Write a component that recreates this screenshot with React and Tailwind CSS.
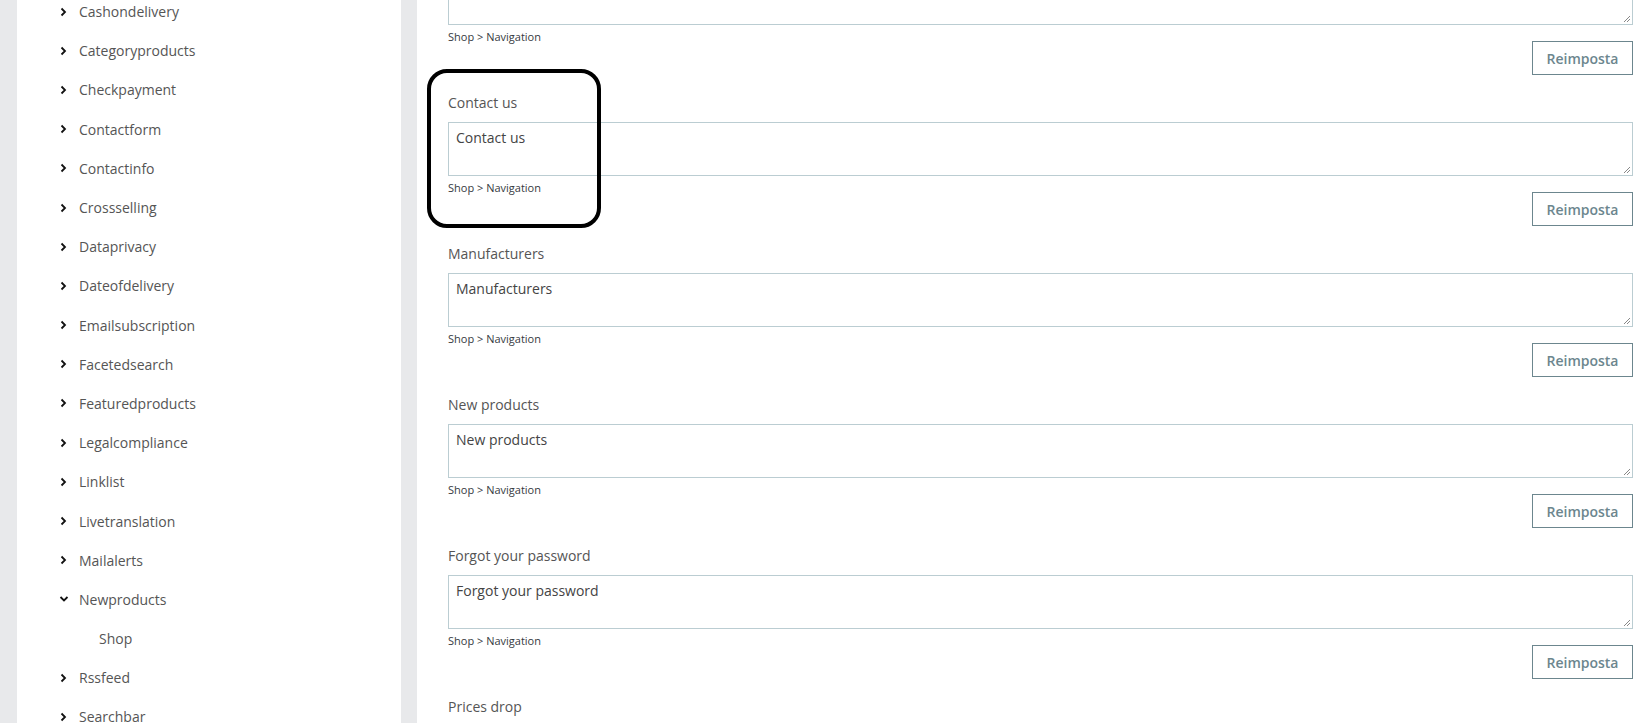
import React from 'react';

const modules = [
  'Cashondelivery',
  'Categoryproducts',
  'Checkpayment',
  'Contactform',
  'Contactinfo',
  'Crossselling',
  'Dataprivacy',
  'Dateofdelivery',
  'Emailsubscription',
  'Facetedsearch',
  'Featuredproducts',
  'Legalcompliance',
  'Linklist',
  'Livetranslation',
  'Mailalerts',
  'Newproducts',
  'Rssfeed',
  'Searchbar',
];

const fields = ['', 'Contact us', 'Manufacturers', 'New products', 'Forgot your password', 'Prices drop'];

function Chevron({ open }) {
  return (
    <svg width="10" height="10" viewBox="0 0 10 10" className="shrink-0">
      {open ? (
        <path d="M1.5 3 L5 6.5 L8.5 3" fill="none" stroke="#111" strokeWidth="1.8" />
      ) : (
        <path d="M2.5 1.5 L6 5 L2.5 8.5" fill="none" stroke="#111" strokeWidth="1.8" />
      )}
    </svg>
  );
}

function Field({ label }) {
  return (
    <div className="mb-[18px]">
      <div className="h-[20px] leading-[20px] text-[14px] text-[#555] mb-[9px]">{label}</div>
      <div className="relative h-[54px] border border-[#bbcdd2] bg-white px-[7px] pt-[4px] text-[14px] text-[#444]">
        {label}
        <svg width="10" height="10" viewBox="0 0 10 10" className="absolute right-[1px] bottom-[1px]">
          <path d="M9 3 L3 9 M9 6 L6 9" stroke="#888" strokeWidth="1" />
        </svg>
      </div>
      <div className="flex items-start justify-between">
        <div className="mt-[5px] text-[11px] leading-[14px] text-[#363a41]">Shop &gt; Navigation</div>
        <button className="mt-[16px] h-[34px] w-[101px] border border-[#6c868e] bg-white text-[14px] font-semibold text-[#6c868e]">
          Reimposta
        </button>
      </div>
    </div>
  );
}

export default function App() {
  return (
    <div
      className="flex h-[723px] w-[1649px] overflow-hidden bg-[#e8e9eb]"
      style={{ fontFamily: '"Open Sans", "Liberation Sans", sans-serif' }}
    >
      <div className="ml-[17px] w-[384px] shrink-0 overflow-hidden bg-white">
        <ul className="-mt-[8px]">
          {modules.map((m) => (
            <React.Fragment key={m}>
              <li className="flex h-[39.2px] items-center pl-[42px] text-[14px] text-[#555]">
                <Chevron open={m === 'Newproducts'} />
                <span className="ml-[10px]">{m}</span>
              </li>
              {m === 'Newproducts' && (
                <li className="flex h-[39.2px] items-center pl-[82px] text-[14px] text-[#555]">Shop</li>
              )}
            </React.Fragment>
          ))}
        </ul>
      </div>
      <div className="ml-[16px] flex-1 overflow-hidden bg-white">
        <div className="relative -mt-[58px] pl-[31px] pr-[16px]">
          {fields.map((f, i) => (
            <Field key={i} label={f} />
          ))}
          <div className="pointer-events-none absolute left-[10px] top-[127px] h-[159px] w-[174px] rounded-[20px] border-[4px] border-black" />
        </div>
      </div>
    </div>
  );
}
